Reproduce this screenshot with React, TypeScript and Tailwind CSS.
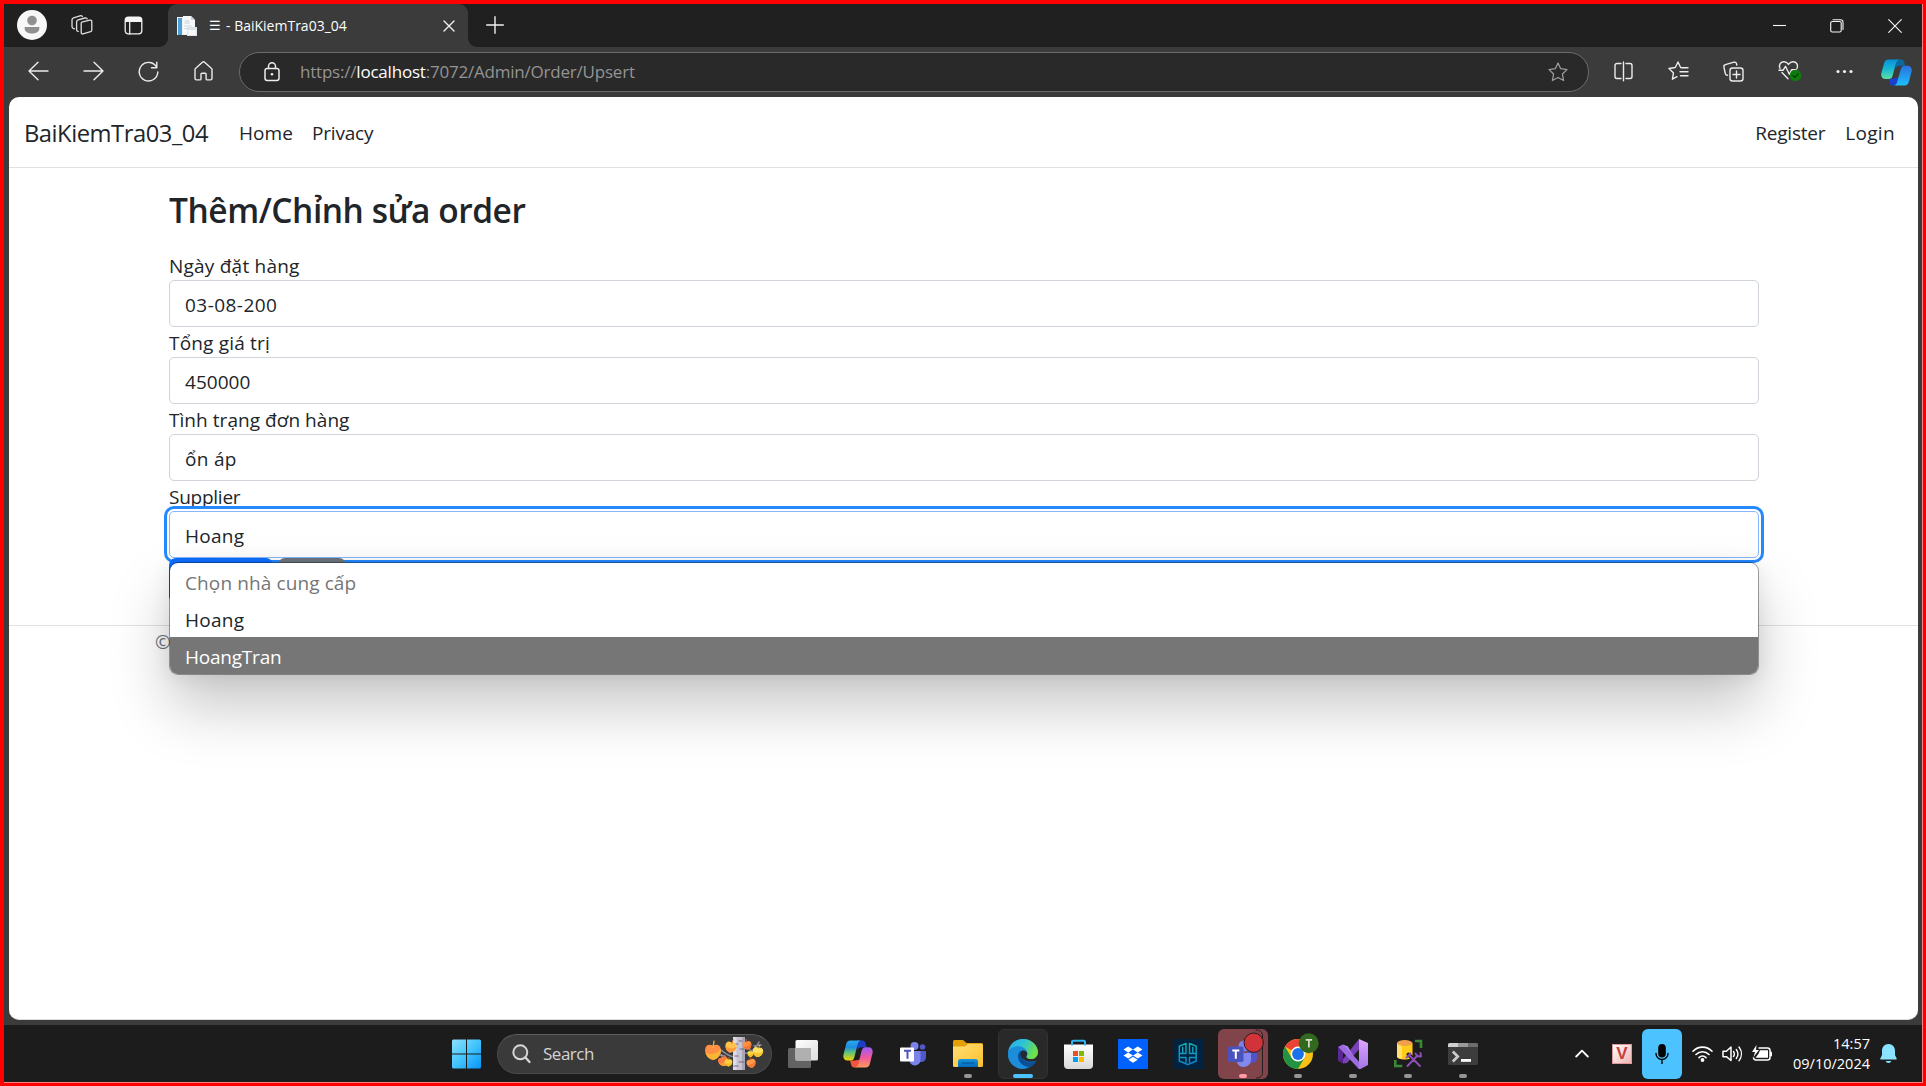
import React from 'react';

type SvgProps = { w: number; h: number; vb?: string; className?: string; children: React.ReactNode };

function Svg({ w, h, vb, className = '', children }: SvgProps) {
  return (
    <svg
      width={w}
      height={h}
      viewBox={vb ?? `0 0 ${w} ${h}`}
      fill="none"
      stroke="none"
      strokeLinecap="round"
      strokeLinejoin="round"
      className={`block shrink-0 ${className}`}
    >
      {children}
    </svg>
  );
}

/* ---------- Browser icons ---------- */

const ProfileIcon = () => (
  <Svg w={30} h={30}>
    <circle cx="15" cy="15" r="15" fill="#f7f7f7" />
    <circle cx="15" cy="10.500" r="4.800" fill="#8f8f8f" />
    <path d="M7.700 17h14.600v1.700c0 3-3.300 4.800-7.300 4.800s-7.300-1.800-7.300-4.800z" fill="#8f8f8f" />
  </Svg>
);

const WorkspacesIcon = () => (
  <Svg w={22} h={22}>
    <g stroke="#dedede" strokeWidth="1.3">
      <path d="M10.700 8.200l8.200-2.100c1-.2 1.900.4 1.900 1.400v8.600c0 .8-.4 1.400-1.200 1.600l-7.600 2.200c-1 .3-1.800-.3-1.800-1.300V9.600c0-.7.2-1.200.5-1.400z" />
      <path d="M7.300 17.500l-.8-.3c-.6-.3-.9-.8-.9-1.500V8c0-1 .5-1.800 1.500-2.100l6.800-1.900c1-.3 2 .1 2.300 1" />
      <path d="M3.500 14.800l-1.300-.5c-.8-.3-1.200-.9-1.200-1.700V6c0-1 .5-1.800 1.500-2.100L9 1.800c1-.3 2 .1 2.300.8" />
    </g>
  </Svg>
);

const TabActionsIcon = () => (
  <Svg w={19} h={19}>
    <rect x="1.200" y="1.200" width="16.600" height="16.600" rx="3" stroke="#f0f0f0" strokeWidth="1.300" />
    <path d="M1 6V4a3 3 0 0 1 3-3h11a3 3 0 0 1 3 3v2z" fill="#f4f4f4" />
    <path d="M5.700 6v12" stroke="#f0f0f0" strokeWidth="1.300" />
  </Svg>
);

const Favicon = () => (
  <Svg w={20} h={20}>
    <rect x="0" y="1" width="15" height="18" fill="#eef1f5" />
    <rect x="1" y="2" width="4" height="17" fill="#4ba0d6" />
    <path d="M6 0h8l4 4v14H6z" fill="#f8f9fb" />
    <path d="M14 0v4h4z" fill="#c9d2dc" />
    <rect x="7.500" y="4" width="5" height="4" fill="#dfe4eb" />
    <path d="M7.500 10h7M7.500 12.500h3" stroke="#cfd6df" strokeWidth="1" />
    <rect x="10" y="11" width="10" height="9" fill="#dde3eb" />
    <rect x="11" y="14" width="8" height="5" fill="#f5f7f9" />
  </Svg>
);

const BackIcon = () => (
  <Svg w={21} h={20}>
    <path d="M20 10H1M10 1.200L1 10l9 8.800" stroke="#ececec" strokeWidth="1.400" />
  </Svg>
);
const ForwardIcon = () => (
  <Svg w={21} h={20}>
    <path d="M1 10h19M11 1.200L20 10l-9 8.800" stroke="#ececec" strokeWidth="1.400" />
  </Svg>
);
const RefreshIcon = () => (
  <Svg w={21} h={21}>
    <path d="M18.800 6.500A9.300 9.300 0 1 0 19.800 11M13.500 6.800h5.300V1.300" stroke="#ececec" strokeWidth="1.400" />
  </Svg>
);
const HomeIcon = () => (
  <Svg w={19} h={20}>
    <path
      d="M1 8.600c0-.6.2-1 .7-1.400l6.700-6c.7-.6 1.500-.6 2.200 0l6.700 6c.5.4.7.8.7 1.400v8.900c0 .8-.6 1.400-1.400 1.400h-3.300c-.7 0-1.200-.5-1.200-1.200v-4.500c0-.6-.4-1-1-1H8c-.6 0-1 .4-1 1v4.500c0 .7-.5 1.200-1.200 1.200H2.400c-.8 0-1.400-.6-1.400-1.400z"
      stroke="#ececec"
      strokeWidth="1.400"
    />
  </Svg>
);
const LockIcon = () => (
  <Svg w={16} h={20}>
    <rect x="1" y="6.500" width="14" height="12" rx="2.200" stroke="#ececec" strokeWidth="1.500" />
    <path d="M4.500 6.500V4.200a3.500 3.500 0 0 1 7 0v2.300" stroke="#ececec" strokeWidth="1.500" />
    <circle cx="8" cy="12.300" r="1.300" fill="#ececec" />
  </Svg>
);
const StarIcon = () => (
  <Svg w={20} h={20}>
    <path
      d="M10 1l2.700 5.700 6.300.9-4.600 4.400 1.200 6.500L10 15.500l-5.600 3 1.200-6.500L1 7.600l6.300-.9z"
      stroke="#9c9c9c"
      strokeWidth="1.300"
    />
  </Svg>
);
const SplitIcon = () => (
  <Svg w={19} h={21}>
    <path
      d="M7 2.500H3A2 2 0 0 0 1 4.500v11a2 2 0 0 0 2 2h4M12 2.500h4a2 2 0 0 1 2 2v11a2 2 0 0 1-2 2h-4M9.500 1v18.700"
      stroke="#ececec"
      strokeWidth="1.400"
    />
  </Svg>
);
const FavoritesIcon = () => (
  <Svg w={21} h={20}>
    <path
      d="M14 6.700l-1.400-.2L10 1 7.300 6.500 1 7.500l4.500 4.400-1.100 6.300 4.600-2.500M12 10.700h8M13.500 6.700h6.500M12.500 14.700h7.500"
      stroke="#ececec"
      strokeWidth="1.400"
    />
  </Svg>
);
const CollectionsIcon = () => (
  <Svg w={21} h={21}>
    <rect x="7" y="7" width="13" height="13" rx="2.500" stroke="#ececec" strokeWidth="1.400" />
    <path
      d="M13.500 10v7M10 13.500h7M4.500 14.200c-1.200 0-1.900-.6-2.200-1.700L.9 6.200C.6 5 1.200 4 2.400 3.700L11 1.200c1.200-.3 2.200.3 2.500 1.500l.3 1.300"
      stroke="#ececec"
      strokeWidth="1.400"
    />
  </Svg>
);
const EssentialsIcon = () => (
  <Svg w={24} h={22}>
    <path
      d="M2 8.500C.6 5.600 2 2 5.600 1.700 8 1.500 9.500 3 10.500 4.400 11.500 3 13 1.500 15.400 1.700c3.600.3 5 3.900 3.600 6.800M4 12.500l6 6.300M1 10.300h4l2.500-4 3.800 8 2.300-4.500h4.500"
      stroke="#ececec"
      strokeWidth="1.400"
    />
    <circle cx="17.500" cy="15.500" r="5.800" fill="#0f7b0f" />
    <path d="M15 15.700l1.800 1.700 3.300-3.400" stroke="#063d06" strokeWidth="1.200" />
  </Svg>
);
const MoreIcon = () => (
  <Svg w={17} h={5}>
    <g fill="#f0f0f0">
      <circle cx="2" cy="2.500" r="1.600" />
      <circle cx="8.500" cy="2.500" r="1.600" />
      <circle cx="15" cy="2.500" r="1.600" />
    </g>
  </Svg>
);

const EdgeCopilotIcon = () => (
  <Svg w={31} h={27}>
    <defs>
      <linearGradient id="ec1" x1="0" y1="0" x2="0" y2="1">
        <stop offset="0" stopColor="#0a8fd8" />
        <stop offset=".5" stopColor="#18b9d4" />
        <stop offset="1" stopColor="#5fe0a0" />
      </linearGradient>
      <linearGradient id="ec2" x1="0" y1="0" x2="0" y2="1">
        <stop offset="0" stopColor="#2a6fe0" />
        <stop offset="1" stopColor="#1cc0fa" />
      </linearGradient>
    </defs>
    <path d="M15 .5h5c2 0 2.800 1.500 3.300 3.200l.9 3h-5.200c-2 0-3.400.8-4.200 3z" fill="#0b6a9e" />
    <path d="M8 20l4-.5 6-1-2 5.500c-.5 1.500-1.500 2.500-3 2.500h-1.500c-1.500 0-2.500-1-2.800-2.500z" fill="#1b3fd0" />
    <path d="M7.500.5H19c-2.500 0-3.500 2-4.200 4.500L11.500 17c-.6 2-1.500 3-3.800 3H4.500C1.200 20-.4 17.500.4 14L3.200 4C3.900 1.800 5.200.5 7.500.5z" fill="url(#ec1)" />
    <path d="M23.500 26.500H12.300c2.500 0 3.500-2 4.200-4.500l3.300-12c.6-2 1.500-3.300 3.800-3.300h3c3.300 0 4.700 2.500 3.900 6L27.800 23c-.7 2.200-2 3.500-4.300 3.500z" fill="url(#ec2)" />
  </Svg>
);

/* ---------- Taskbar icons ---------- */

const StartIcon = () => (
  <Svg w={30} h={30}>
    <defs>
      <linearGradient id="st" x1="0" y1="0" x2="30" y2="30" gradientUnits="userSpaceOnUse">
        <stop offset="0" stopColor="#8fe0ff" />
        <stop offset=".5" stopColor="#41c4fc" />
        <stop offset="1" stopColor="#0591f8" />
      </linearGradient>
    </defs>
    <path d="M1.500 0.500H14v14H0V2A1.500 1.500 0 0 1 1.500.5zM15 .5h12.500A1.500 1.500 0 0 1 29 2V14.500H15zM0 15.500h14v14H1.500A1.500 1.500 0 0 1 0 28zM15 15.500h14V28a1.500 1.500 0 0 1-1.500 1.500H15z" fill="url(#st)" />
  </Svg>
);

const SearchIcon = () => (
  <Svg w={19} h={20}>
    <circle cx="8.300" cy="8.300" r="7" fill="#4d4d4d" stroke="#d6d6d6" strokeWidth="2" />
    <path d="M13.500 13.500l4 4.500" stroke="#d6d6d6" strokeWidth="2.300" />
  </Svg>
);

const Leaf = ({ x, y, s, c, c2, r = 0 }: { x: number; y: number; s: number; c: string; c2: string; r?: number }) => (
  <g transform={`translate(${x} ${y}) rotate(${r}) scale(${s})`}>
    <path d="M0 9C-5 8-8 3-7.500-1c.4-4 3.500-5.500 7.500-3.500C4-6.500 7-5 7.500-1 8 3 5 8 0 9z" fill={c} />
    <path d="M0 9C-4 8-6.500 5-7 2-3 4.500 4 3 7.500-1 8 4 5 8 0 9z" fill={c2} />
    <path d="M0-3L1-9" stroke={c2} strokeWidth="1.200" />
  </g>
);

const AutumnArt = () => (
  <Svg w={60} h={34}>
    <path d="M29 20C22 19 18 14 13 11M20 19l-5-1M38 17c7-1 13-5 16-12M45 13l-2-6M49 9l7-1" stroke="#8d8a9c" strokeWidth="1.500" />
    <rect x="28" y="0" width="12" height="33" fill="#c7c3d2" />
    <rect x="28" y="0" width="3.500" height="33" fill="#dedbe6" />
    <rect x="37" y="0" width="3" height="33" fill="#a9a5b8" />
    <path d="M29 7h4M35 12h4M30 19h3M34 25h5M29 29h4M34 4h3" stroke="#6f6b80" strokeWidth="1.100" />
    <Leaf x={8} y={13.500} s={1.050} c="#ff8f45" c2="#fbb534" />
    <Leaf x={26} y={9} s={0.740} c="#ffc24a" c2="#ff9b3d" r={15} />
    <Leaf x={18} y={23.500} s={0.660} c="#ff7c3f" c2="#f9a03a" r={-20} />
    <Leaf x={23.500} y={25} s={0.500} c="#ffd23f" c2="#f6bd25" />
    <Leaf x={42} y={7.500} s={0.580} c="#ff9143" c2="#f7722e" r={-15} />
    <Leaf x={53} y={14} s={0.680} c="#ffe066" c2="#f8c62c" r={10} />
    <Leaf x={45.500} y={16.500} s={0.400} c="#ffd84d" c2="#f3bb20" />
    <Leaf x={46} y={25.500} s={0.600} c="#ff9a4a" c2="#f47a35" r={-15} />
  </Svg>
);

const TaskViewIcon = () => (
  <Svg w={30} h={28}>
    <defs>
      <linearGradient id="tv" x1="0" y1="0" x2="1" y2="1">
        <stop offset="0" stopColor="#fff" />
        <stop offset="1" stopColor="#dcdcdc" />
      </linearGradient>
    </defs>
    <rect x="0" y="8" width="23" height="20" rx="1.500" fill="#636363" />
    <rect x="7.500" y="0" width="22.500" height="20.500" rx="1.500" fill="url(#tv)" />
    <path d="M7.500 8H23v12.500H9a1.500 1.500 0 0 1-1.500-1.500z" fill="#b0b0b0" />
  </Svg>
);

const CopilotIcon = () => (
  <Svg w={30} h={28}>
    <defs>
      <linearGradient id="cp1" x1="0" y1="0" x2="0" y2="1">
        <stop offset="0" stopColor="#2aa8f0" />
        <stop offset=".35" stopColor="#1e8fe0" />
        <stop offset=".6" stopColor="#5fc27c" />
        <stop offset="1" stopColor="#f5d400" />
      </linearGradient>
      <linearGradient id="cp2" x1="0" y1="0" x2="0" y2="1">
        <stop offset="0" stopColor="#9b5cf6" />
        <stop offset=".5" stopColor="#f0589f" />
        <stop offset="1" stopColor="#ff9a5a" />
      </linearGradient>
    </defs>
    <path d="M14 .5h5.500c1.800 0 2.600 1.200 3.100 3l1 3.700h-4.800c-2 0-3.500.8-4.300 3z" fill="#1a3fc4" />
    <path d="M7 20.500h5l5-1-1.500 5c-.6 2-1.500 3-3 3H11c-1.500 0-2.400-1-2.800-2.500z" fill="#f2553c" />
    <path d="M7.300.5h11.200c-2.500 0-3.400 2-4 4.200l-3 12c-.6 2.200-1.500 3.800-3.800 3.800H4.500C1.200 20.500-.3 18 .5 14.500L3.200 4C3.800 1.800 5 .5 7.300.5z" fill="url(#cp1)" />
    <path d="M22.700 27.500H11.500c2.500 0 3.400-2 4-4.200l3-12c.6-2.200 1.500-4 3.800-4h3.200c3.300 0 4.800 2.500 4 6L26.800 24c-.6 2.200-1.800 3.500-4.100 3.500z" fill="url(#cp2)" />
  </Svg>
);

const TeamsFreeIcon = () => (
  <Svg w={27} h={24}>
    <circle cx="14.500" cy="4" r="4" fill="#7b83eb" />
    <circle cx="22.500" cy="5" r="2.800" fill="#5059c9" />
    <path d="M17 9h9v6c0 3-2 5-5 5h-4z" fill="#5059c9" />
    <path d="M10 9h10.500v8.500a5.500 5.500 0 0 1-11 1z" fill="#7b83eb" />
    <rect x="0" y="5.500" width="14" height="14" rx="1" fill="#fff" />
    <path d="M4 8.700h7M7.500 8.700v8" stroke="#4b53bc" strokeWidth="2" strokeLinecap="butt" />
  </Svg>
);

const FolderIcon = () => (
  <Svg w={30} h={28}>
    <defs>
      <linearGradient id="fo" x1="0" y1="0" x2="1" y2="1">
        <stop offset="0" stopColor="#ffdf76" />
        <stop offset="1" stopColor="#fcc02d" />
      </linearGradient>
      <linearGradient id="fb" x1="0" y1="0" x2="0" y2="1">
        <stop offset="0" stopColor="#1597e0" />
        <stop offset="1" stopColor="#0669bd" />
      </linearGradient>
    </defs>
    <path d="M0 1.500A1.500 1.500 0 0 1 1.500 0H9c1 0 1.500.3 2.200 1L13.500 3H28.500A1.500 1.500 0 0 1 30 4.500V12H0z" fill="#e3a008" />
    <path d="M0 6.500h11c1 0 1.500-.3 2.200-1L15 4h13.500A1.500 1.500 0 0 1 30 5.500v20a1.500 1.500 0 0 1-1.500 1.500h-27A1.500 1.500 0 0 1 0 25.500z" fill="url(#fo)" />
    <path d="M5 27v-5.500A2.500 2.500 0 0 1 7.500 19h15a2.500 2.500 0 0 1 2.500 2.500V27z" fill="url(#fb)" />
    <path d="M9 23h12" stroke="#064f94" strokeWidth="1" />
  </Svg>
);

const EdgeIcon = () => (
  <Svg w={30} h={30}>
    <defs>
      <linearGradient id="eg1" x1="0" y1="0" x2="1" y2=".4">
        <stop offset="0" stopColor="#2aa9e8" />
        <stop offset=".5" stopColor="#2cc3d8" />
        <stop offset="1" stopColor="#6fe04a" />
      </linearGradient>
      <linearGradient id="eg2" x1="0" y1="0" x2="1" y2="1">
        <stop offset="0" stopColor="#1c8fdc" />
        <stop offset="1" stopColor="#0c59a4" />
      </linearGradient>
    </defs>
    <path d="M0 15a15 15 0 0 1 30 0c0 3-8 4-8 6 0 1 4 1.500 6.300.500C25.500 27 20.500 30 15 30A15 15 0 0 1 0 15z" fill="url(#eg2)" />
    <path d="M.3 12.500C1.500 5 7.500 0 15 0c8.800 0 15 6.500 15 13 0 4.500-3.300 7.300-7 7.300-3.200 0-5-1.300-4.700-2.400.3-.9 1-1.300 1-3.200 0-3.500-3.600-6.600-8.300-6.600C6 8.100 1.800 9.500.3 12.500z" fill="url(#eg1)" />
    <path d="M0 15c0-4.200 4.500-7.800 10-7.800 4 0 8 2.300 9 5.800-1.500-1.700-3.500-2-5-1.500-3 1-4.700 4-3.700 8 1.200 4.700 5 7.800 10 8.300C17 30.500 13 30 11 29.400 4.500 27.500 0 22 0 15z" fill="#1c8ddb" />
    <path d="M14 11.500c-3 1-4.700 4-3.700 8 1.400 5.300 7.500 9.500 13.200 7.800 2-1.300 3.600-3 4.500-5-2.500 1.200-5.500 1.500-8.500.6-5-1.500-7-5.500-6.500-8.500.2-1.300.5-2.200 1-2.900z" fill="#0b4f98" />
    <path d="M28.300 21.300c-2.500 1.300-6 1.600-9.300.7-4-1.200-6.500-4-6.500-6.500 0-2 .8-3.300 1.800-4.100 3 0 5 1.600 5 3.400 0 1.600-1 2-1 3 0 1.400 2 2.500 4.700 2.500 2 0 3.800-.3 5.300 1z" fill="#232a31" />
  </Svg>
);

const StoreIcon = () => (
  <Svg w={29} h={30}>
    <defs>
      <linearGradient id="so" x1="0" y1="0" x2="0" y2="1">
        <stop offset="0" stopColor="#fff" />
        <stop offset="1" stopColor="#d9d9d9" />
      </linearGradient>
    </defs>
    <path d="M0 5.500h29V26a4 4 0 0 1-4 4H4a4 4 0 0 1-4-4z" fill="url(#so)" />
    <path d="M8 6.500V3A1.300 1.300 0 0 1 9.300 1.700h10.400A1.300 1.300 0 0 1 21 3V6.500" stroke="#2fb4f3" strokeWidth="2" strokeLinecap="butt" />
    <rect x="9" y="12" width="5" height="5" fill="#f04e23" />
    <rect x="15" y="12" width="5" height="5" fill="#80b900" />
    <rect x="9" y="18" width="5" height="5" fill="#00a2ed" />
    <rect x="15" y="18" width="5" height="5" fill="#fdb800" />
  </Svg>
);

const DropboxIcon = () => (
  <Svg w={30} h={30}>
    <rect width="30" height="30" fill="#0061fe" />
    <path d="M10.200 7.500l4.800 3-4.800 3-4.700-3zM19.800 7.500l4.700 3-4.700 3-4.800-3zM10.200 13.600l4.800 3-4.800 3-4.700-3zM19.800 13.600l4.700 3-4.700 3-4.800-3zM15 17.700l4.700 3-4.700 3-4.700-3z" fill="#fff" />
  </Svg>
);

const ShieldAppIcon = () => (
  <Svg w={30} h={30}>
    <defs>
      <linearGradient id="sh" x1="0" y1="0" x2="0" y2="30" gradientUnits="userSpaceOnUse">
        <stop offset="0" stopColor="#16b8a8" />
        <stop offset="1" stopColor="#0a80d8" />
      </linearGradient>
    </defs>
    <rect width="30" height="30" fill="#02233f" />
    <path
      d="M13 4.500L6.300 7.200v7.300H13zM16.500 4.500l6.700 2.700v7.300h-6.700zM9.700 8.500v6M19.800 8.500v6M6.300 14.500V22l8.500 3.700L23.200 22v-7.500M6.300 18.500h6.700v4.800M23.200 18.500h-6.700v4.800"
      stroke="url(#sh)"
      strokeWidth="1.400"
    />
  </Svg>
);

const TeamsIcon = () => (
  <Svg w={50} h={50}>
    <rect x="0" y="0" width="50" height="50" rx="6" fill="#80444a" />
    <path d="M38 1c4 0 6.500 2 6.500 6v36c0 4-2 6-6 6" stroke="#252020" strokeWidth="1" />
    <path d="M29 19h10v9c0 4-2 6-6 6h-4z" fill="#4f56c4" />
    <circle cx="26" cy="17" r="5.500" fill="#7b83eb" />
    <path d="M19 24h14v7a7.300 7.300 0 0 1-14.500 1z" fill="#8288ee" />
    <rect x="10" y="17.500" width="15.500" height="15.500" rx="1.800" fill="#4a52bd" />
    <path d="M14.300 21.500h7M17.800 21.500v8.200" stroke="#fff" strokeWidth="2" strokeLinecap="butt" />
    <circle cx="35.700" cy="13.700" r="9.700" fill="#d13438" stroke="#2c1b1d" strokeWidth="1" />
  </Svg>
);

const ChromeIcon = () => (
  <Svg w={36} h={36}>
    <circle cx="15" cy="21" r="15" fill="#fbc116" />
    <path d="M15 21L2 13.500A15 15 0 0 1 28 13.500H15z" fill="#ea4335" />
    <path d="M2 13.500l6.500 11.200L15 28l6.500-3.200L15 36A15 15 0 0 1 2 13.500z" fill="#229342" />
    <circle cx="15" cy="21" r="7.400" fill="#fff" />
    <circle cx="15" cy="21" r="5.900" fill="#1a73e8" />
    <circle cx="25.700" cy="10.300" r="10" fill="#33691e" />
    <path d="M22.700 6.800h6.400M25.900 6.800v7.600" stroke="#d7dfd0" strokeWidth="1.700" strokeLinecap="butt" />
  </Svg>
);

const VisualStudioIcon = () => (
  <Svg w={30} h={30}>
    <defs>
      <linearGradient id="vs" x1="0" y1="0" x2="0" y2="1">
        <stop offset="0" stopColor="#dba6ff" />
        <stop offset="1" stopColor="#a476e6" />
      </linearGradient>
    </defs>
    <path d="M0 8l5-2.500v19L0 22z" fill="#52218a" />
    <path d="M5 24.500V20l16-20v10.500L9 24z" fill="#7942b8" />
    <path d="M5 5.500L10 7.500 22.500 30 21 30 5 11.500z" fill="#b185ee" />
    <path d="M0 8l5-2.500L21 22.500V30z" fill="#9c6be0" />
    <path d="M0 8v14l5-2.500V13z" fill="#5a2a94" />
    <path d="M21 0l9 4v22l-7.500 4-1.500-.5z" fill="url(#vs)" />
  </Svg>
);

const SsmsIcon = () => (
  <Svg w={30} h={30}>
    <path d="M22 2h6v7" stroke="#388a34" strokeWidth="2.600" strokeLinecap="butt" strokeLinejoin="miter" />
    <path d="M2.300 21v6h7" stroke="#388a34" strokeWidth="2.600" strokeLinecap="butt" strokeLinejoin="miter" />
    <path d="M4 4h15.500v13.500c0 1.800-3.500 3-7.800 3S4 19.300 4 17.500z" fill="#ffcc1a" />
    <path d="M4 4h5v16c-3-.4-5-1.300-5-2.500z" fill="#ffe070" />
    <ellipse cx="11.700" cy="4" rx="7.700" ry="3" fill="#f0a04b" />
    <path d="M15 26l9.500-10M26.500 26L15.500 15.500" stroke="#1c1c1c" strokeWidth="4" />
    <path d="M14.500 27l10-10.500M27 27L16 16M13.500 18.500l4-4M22.500 14.500l1.500 2.500 3.500.500M27.500 14l.5 3.500" stroke="#8e4fb8" strokeWidth="1.900" />
  </Svg>
);

const TerminalIcon = () => (
  <Svg w={30} h={22}>
    <rect width="30" height="22" rx="1.500" fill="#3d3d3d" />
    <path d="M0 4V1.500A1.500 1.500 0 0 1 1.500 0H10v4z" fill="#cfcfcf" />
    <rect x="10" y="0" width="10" height="4" fill="#9a9a9a" />
    <path d="M20 0h8.500A1.500 1.500 0 0 1 30 1.500V4H20z" fill="#6d6d6d" />
    <path d="M4.800 8.500l5 5-5 5" stroke="#cdcdcd" strokeWidth="2.600" strokeLinecap="butt" strokeLinejoin="miter" />
    <rect x="13" y="16" width="10" height="2.800" fill="#fff" />
  </Svg>
);

const WifiIcon = () => (
  <Svg w={21} h={18}>
    <path d="M1 6.200c5.200-5.400 13.800-5.400 19 0M4 9.500c3.600-3.700 9.400-3.700 13 0M7 12.600c2-2 5-2 7 0" stroke="#fff" strokeWidth="1.600" />
    <circle cx="10.500" cy="15" r="1.900" fill="#fff" />
  </Svg>
);
const SpeakerIcon = () => (
  <Svg w={21} h={18}>
    <path d="M1 6.200h3.400L9 2v13.500L4.400 11.700H1z" stroke="#fff" strokeWidth="1.500" />
    <path d="M11.500 6.500c1 1.500 1 3.500 0 5M14.300 4.500c2 2.700 2 6.300 0 9M17 2c3.200 4 3.200 9.500 0 13.800" stroke="#fff" strokeWidth="1.400" />
  </Svg>
);
const BatteryIcon = () => (
  <Svg w={21} h={18}>
    <path d="M7 3h8.500A2.500 2.500 0 0 1 18 5.500v7a2.500 2.500 0 0 1-2.500 2.500h-12A2.500 2.500 0 0 1 1.500 13" stroke="#fff" strokeWidth="1.500" />
    <rect x="18" y="6.500" width="2" height="5" rx="1" fill="#fff" />
    <path d="M8 5.200h8v7.600H3.500l3-4z" fill="#fff" />
    <path d="M4.500 0L0 7h3l-1.500 5L7 5H4z" fill="#fff" />
  </Svg>
);
const BellIcon = () => (
  <Svg w={17} h={20}>
    <path d="M8.500 0C4.500 0 2 3 2 6.800V11L.3 14.500c-.2.500.1 1 .7 1h15c.6 0 .9-.5.7-1L15 11V6.800C15 3 12.500 0 8.500 0z" fill="#8be4ff" />
    <path d="M5.700 17h5.600c-.4 1.300-1.500 2-2.800 2s-2.400-.7-2.800-2z" fill="#8be4ff" />
  </Svg>
);
const MicIcon = () => (
  <Svg w={14} h={20}>
    <rect x="3.200" y="0" width="7.600" height="13.500" rx="3.800" fill="#050505" />
    <path d="M1 9.500a6 6 0 0 0 12 0M7 15.500v4" stroke="#050505" strokeWidth="1.400" />
  </Svg>
);

/* ---------- Page pieces ---------- */

function Field({ label, labelClass, value, valueClass, focused = false }: {
  label: string; labelClass: string; value: string; valueClass: string; focused?: boolean;
}) {
  return (
    <div className="h-[77px]">
      <div className={`h-[30px] leading-[32px] ${labelClass}`}>{label}</div>
      <div
        className={`h-[47px] rounded-[5px] border bg-white pl-[15px] pt-[2px] leading-[45px] ${valueClass} ${
          focused ? 'border-[#86b7fe] outline-[3px] outline-offset-2 outline-[#2489ff]' : 'border-[#ced4da]'
        }`}
      >
        {value}
      </div>
    </div>
  );
}

function TaskCell({ children, indicator }: { children: React.ReactNode; indicator?: 'idle' | 'active' | 'alert' }) {
  return (
    <div
      className={`relative flex h-[50px] w-[50px] items-center justify-center rounded-[6px] ${
        indicator === 'active' ? 'border border-[#323232] bg-[#292929]' : ''
      }`}
    >
      {children}
      {indicator === 'idle' && <div className="absolute bottom-[1px] h-[4px] w-[8px] rounded-full bg-[#969696]" />}
      {indicator === 'active' && <div className="absolute bottom-0 h-[4px] w-[20px] rounded-full bg-[#4cc2ff]" />}
      {indicator === 'alert' && <div className="absolute bottom-[1px] h-[4px] w-[8px] rounded-full bg-[#ff99a4]" />}
    </div>
  );
}

export default function App() {
  return (
    <div className="h-[1086px] w-[1926px] overflow-hidden bg-[#ff0000] pl-1 pt-1 font-['Open_Sans',sans-serif]">
      <div className="flex h-[1079px] w-[1919px] flex-col border-b border-r border-[#ff8080] bg-[#3b3b3b]">
        {/* Tab strip */}
        <div className="flex h-[43px] shrink-0 items-center bg-[#202020] pl-[13px]">
          <div className="pb-px"><ProfileIcon /></div>
          <div className="ml-6 pb-px"><WorkspacesIcon /></div>
          <div className="ml-[31px]"><TabActionsIcon /></div>
          <div className="ml-[16px] flex h-full w-[9px] items-end bg-[#3b3b3b]">
            <div className="h-full w-full rounded-br-[9px] bg-[#202020]" />
          </div>
          <div className="flex h-full w-[300px] items-center rounded-t-[9px] bg-[#3b3b3b] pl-[9px] text-[14px] text-white">
            <Favicon />
            <span className="ml-[12px] w-[13px] font-['DejaVu_Sans'] text-[13px] leading-[20px]">☰</span>
            <span className="ml-[4px] w-[126px] whitespace-nowrap leading-[20px]">- BaiKiemTra03_04</span>
            <div className="ml-[91px] pt-px">
              <Svg w={12} h={12}><path d="M1 1l10 10M11 1L1 11" stroke="#f0f0f0" strokeWidth="1.400" /></Svg>
            </div>
          </div>
          <div className="flex h-full w-[9px] bg-[#3b3b3b]">
            <div className="h-full w-full rounded-bl-[9px] bg-[#202020]" />
          </div>
          <div className="ml-[9px] pb-px">
            <Svg w={18} h={18}><path d="M9 .7v16.600M.7 9h16.600" stroke="#f0f0f0" strokeWidth="1.400" /></Svg>
          </div>
          <div className="ml-auto mr-[20px] flex items-center">
            <Svg w={13} h={13}><path d="M0 6.500h13" stroke="#f5f5f5" strokeWidth="1.100" strokeLinecap="butt" /></Svg>
            <Svg w={14} h={14} className="ml-[44px]">
              <rect x=".7" y="2.500" width="10.500" height="10.500" rx="1.500" stroke="#f5f5f5" strokeWidth="1.100" />
              <path d="M3 .7h7.500A2.600 2.600 0 0 1 13 3.300V10.500" stroke="#f5f5f5" strokeWidth="1.100" />
            </Svg>
            <Svg w={14} h={14} className="ml-[44px]"><path d="M.7.7l12.600 12.600M13.300.7L.7 13.300" stroke="#f5f5f5" strokeWidth="1.100" /></Svg>
          </div>
        </div>

        {/* Toolbar */}
        <div className="flex h-[50px] shrink-0 items-center pb-[2px] pl-[24px]">
          <BackIcon />
          <div className="ml-[34px]"><ForwardIcon /></div>
          <div className="ml-[34px]"><RefreshIcon /></div>
          <div className="ml-[35px]"><HomeIcon /></div>
          <div className="ml-[26px] mt-px flex h-[40px] w-[1350px] items-center rounded-full border border-[#6c6c6c] bg-[#292929] pl-[24px] pr-[20px] text-[17px] text-[#949494]">
            <LockIcon />
            <span className="ml-[20px] whitespace-nowrap leading-[24px] tracking-[-0.21px]">
              https://<span className="text-white">localhost</span>:7072/Admin/Order/Upsert
            </span>
            <div className="ml-auto"><StarIcon /></div>
          </div>
          <div className="ml-[25px]"><SplitIcon /></div>
          <div className="ml-[35px]"><FavoritesIcon /></div>
          <div className="ml-[34px]"><CollectionsIcon /></div>
          <div className="ml-[34px]"><EssentialsIcon /></div>
          <div className="ml-[34px]"><MoreIcon /></div>
          <div className="ml-[28px] pt-[2px]"><EdgeCopilotIcon /></div>
        </div>

        {/* Web page */}
        <div className="ml-[5px] h-[923px] w-[1909px] shrink-0 overflow-hidden rounded-[10px] border-b border-[#dcdcdc] bg-white text-[19px] text-[#212529]">
          <header className="flex h-[71px] items-center border-b border-[#dee2e6] pl-[15px] pr-[23px] pt-px">
            <span className="w-[215px] whitespace-nowrap text-[23.75px] leading-[36px] tracking-[-0.47px]">BaiKiemTra03_04</span>
            <span className="w-[73px] leading-[30px] tracking-[0.09px]">Home</span>
            <span className="leading-[30px] tracking-[-0.2px]">Privacy</span>
            <span className="ml-auto leading-[30px] tracking-[-0.24px]">Register</span>
            <span className="ml-[20px] leading-[30px] tracking-[0.34px]">Login</span>
          </header>

          <main className="relative ml-[160px] w-[1590px] pt-[21px]">
            <h2 className="mb-[18px] whitespace-nowrap text-[33.5px] font-semibold leading-[43px] tracking-[-0.45px]">
              Thêm/Chỉnh sửa order
            </h2>
            <Field label="Ngày đặt hàng" labelClass="tracking-[0.22px]" value="03-08-200" valueClass="tracking-[0.45px]" />
            <Field label="Tổng giá trị" labelClass="tracking-[0.19px]" value="450000" valueClass="tracking-[0.04px]" />
            <Field label="Tình trạng đơn hàng" labelClass="tracking-[0.05px]" value="ổn áp" valueClass="tracking-[0.3px]" />
            <Field label="Supplier" labelClass="tracking-[-0.25px]" value="Hoang" valueClass="tracking-[0.26px]" focused />
            <div className="relative flex gap-[5px]">
              <div className="h-[45px] w-[104px] rounded-[7px] bg-[#0d6efd]" />
              <div className="h-[45px] w-[68px] rounded-[7px] bg-[#6c757d]" />
            </div>

            {/* Open option list */}
            <ul className="absolute left-0 top-[394px] z-10 w-[1590px] overflow-hidden rounded-[9px] border border-black/35 bg-white bg-clip-padding shadow-[0_32px_60px_rgba(0,0,0,0.22),0_2px_20px_rgba(0,0,0,0.08)]">
              <li className="h-[37px] pl-[15px] leading-[41px] tracking-[0.11px] text-[#767676]">Chọn nhà cung cấp</li>
              <li className="h-[37px] pl-[15px] leading-[41px] tracking-[0.26px]">Hoang</li>
              <li className="h-[37px] bg-[#767676] pl-[15px] leading-[41px] tracking-[-0.22px] text-white">HoangTran</li>
            </ul>
          </main>

          <footer className="mt-[22px] border-t border-[#dee2e6] pl-[146px] leading-[32px] text-[#6c757d]">©</footer>
        </div>

        {/* Taskbar */}
        <div className="mt-[5px] flex h-[57px] shrink-0 items-center bg-[#1c1c1c]">
          <div className="ml-[448px]"><StartIcon /></div>
          <div className="ml-[15px] flex h-[40px] w-[275px] items-center rounded-full border border-[#4a4a4a] border-t-[#5c5c5c] bg-[#3a3a3a] pl-[14px] pr-[6px]">
            <SearchIcon />
            <span className="ml-[12px] pt-px text-[17px] leading-[24px] tracking-[-0.48px] text-[#d4d4d4]">Search</span>
            <div className="ml-auto pt-px"><AutumnArt /></div>
          </div>
          <div className="ml-[6px] flex gap-[5px]">
            <TaskCell><TaskViewIcon /></TaskCell>
            <TaskCell><CopilotIcon /></TaskCell>
            <TaskCell><TeamsFreeIcon /></TaskCell>
            <TaskCell indicator="idle"><FolderIcon /></TaskCell>
            <TaskCell indicator="active"><EdgeIcon /></TaskCell>
            <TaskCell><StoreIcon /></TaskCell>
            <TaskCell><DropboxIcon /></TaskCell>
            <TaskCell><ShieldAppIcon /></TaskCell>
            <TaskCell indicator="alert"><TeamsIcon /></TaskCell>
            <TaskCell indicator="idle"><div className="-mt-[6px] ml-[6px]"><ChromeIcon /></div></TaskCell>
            <TaskCell indicator="idle"><VisualStudioIcon /></TaskCell>
            <TaskCell indicator="idle"><SsmsIcon /></TaskCell>
            <TaskCell indicator="idle"><TerminalIcon /></TaskCell>
          </div>
          <div className="ml-auto flex items-center">
            <Svg w={14} h={9}><path d="M1.200 7.500L7 1.700l5.800 5.800" stroke="#fff" strokeWidth="1.800" /></Svg>
            <div className="ml-[23px] flex h-[20px] w-[20px] items-center justify-center border border-[#d99] bg-linear-to-br from-white to-[#eeb4b4] font-['Liberation_Sans'] text-[17px] font-bold leading-none text-[#c8403e]">
              V
            </div>
            <div className="ml-[10px] flex h-[50px] w-[40px] items-center justify-center rounded-[6px] bg-[#4cc2ff]"><MicIcon /></div>
            <div className="ml-[10px]"><WifiIcon /></div>
            <div className="ml-[9px]"><SpeakerIcon /></div>
            <div className="ml-[9px]"><BatteryIcon /></div>
            <div className="ml-[18px] w-[79px] pt-px text-right text-[14.5px] leading-[20px] text-white">
              <div>14:57</div>
              <div>09/10/2024</div>
            </div>
            <div className="ml-[10px] mr-[25px]"><BellIcon /></div>
          </div>
        </div>
      </div>
    </div>
  );
}
